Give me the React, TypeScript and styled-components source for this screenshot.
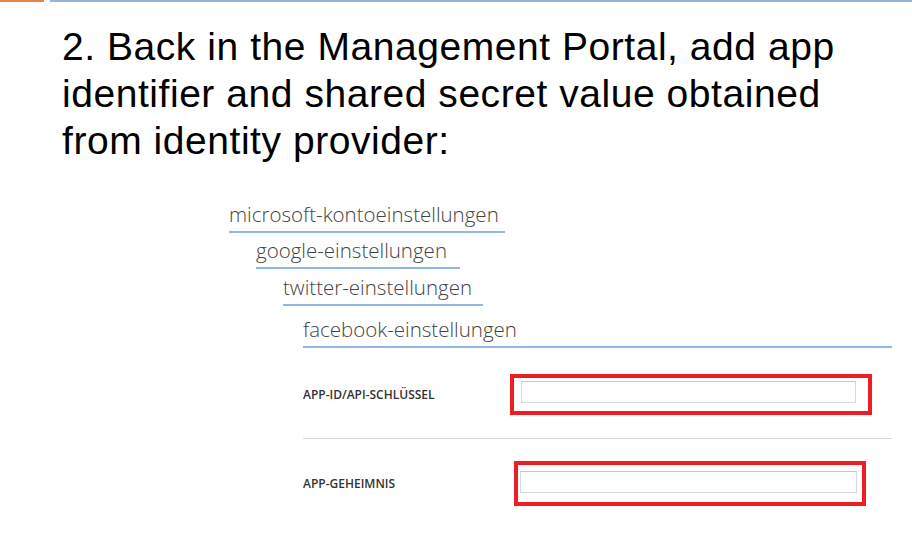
import React from "react";
import styled, { createGlobalStyle } from "styled-components";

const Global = createGlobalStyle`
  html, body { margin: 0; padding: 0; background: #ffffff; }
  body { width: 912px; height: 548px; overflow: hidden; }
`;

const Page = styled.div`
  width: 912px;
  height: 548px;
  background: #fff;
  display: flex;
  flex-direction: column;
`;

const TopBar = styled.div`
  display: flex;
  gap: 6px;
  height: 2px;
`;

const BarSegment = styled.div<{ $color: string; $width?: number }>`
  height: 2px;
  background: ${(p) => p.$color};
  ${(p) => (p.$width ? `width: ${p.$width}px;` : "flex: 1;")}
`;

const Title = styled.h1`
  margin: 21px 0 0 62px;
  width: 790px;
  font-family: "Liberation Sans", Arial, sans-serif;
  font-weight: 400;
  font-size: 39px;
  letter-spacing: 0.55px;
  line-height: 47px;
  color: #000;
`;

const Panel = styled.div`
  margin: 37px 0 0 229px;
  width: 663px;
  display: flex;
  flex-direction: column;
`;

const Tab = styled.div<{ $indent: number; $pad: number; $full?: boolean; $gap: number }>`
  align-self: ${(p) => (p.$full ? "stretch" : "flex-start")};
  margin-left: ${(p) => p.$indent}px;
  margin-top: ${(p) => p.$gap}px;
  padding: 0 ${(p) => p.$pad}px 4px 0;
  border-bottom: 2px solid #8fb9e3;
  font-family: "Open Sans", "Noto Sans", sans-serif;
  font-weight: 300;
  font-size: 20.5px;
  line-height: 26px;
  color: #444;
  white-space: nowrap;
`;

const Form = styled.div`
  margin-left: 74px;
  display: flex;
  flex-direction: column;
`;

const Row = styled.div<{ $gap: number }>`
  display: flex;
  align-items: center;
  margin-top: ${(p) => p.$gap}px;
`;

const Label = styled.div<{ $width: number }>`
  width: ${(p) => p.$width}px;
  flex: none;
  font-family: "Open Sans", "Noto Sans", sans-serif;
  font-weight: 600;
  font-size: 12px;
  color: #333;
  white-space: nowrap;
`;

const Highlight = styled.div<{ $w: number; $pt: number; $pr: number; $pb: number; $pl: number }>`
  box-sizing: border-box;
  width: ${(p) => p.$w}px;
  border: 4px solid #ee1c25;
  padding: ${(p) => `${p.$pt}px ${p.$pr}px ${p.$pb}px ${p.$pl}px`};
  background: #fff;
`;

const Input = styled.input`
  box-sizing: border-box;
  display: block;
  width: 100%;
  height: 22px;
  margin: 0;
  border: 1px solid #d3d9e2;
  border-top-color: #c4c7cd;
  background: #fff;
  outline: none;
`;

const Divider = styled.div`
  height: 1px;
  background: #dadada;
  margin-top: 23px;
`;

const tabs = [
  { label: "microsoft-kontoeinstellungen", indent: 0, pad: 6, gap: 0 },
  { label: "google-einstellungen", indent: 27, pad: 13, gap: 4 },
  { label: "twitter-einstellungen", indent: 54, pad: 11, gap: 5 },
];

export default function App() {
  return (
    <Page>
      <Global />
      <TopBar>
        <BarSegment $color="#e8834a" $width={44} />
        <BarSegment $color="#95b3d7" />
      </TopBar>
      <Title>
        2. Back in the Management Portal, add app identifier and shared secret value obtained from identity provider:
      </Title>
      <Panel>
        {tabs.map((t) => (
          <Tab key={t.label} $indent={t.indent} $pad={t.pad} $gap={t.gap}>
            {t.label}
          </Tab>
        ))}
        <Form>
          <Tab $indent={0} $pad={0} $gap={10} $full>
            facebook-einstellungen
          </Tab>
          <Row $gap={26}>
            <Label $width={207}>APP-ID/API-SCHLÜSSEL</Label>
            <Highlight $w={362} $pt={3} $pr={12} $pb={8} $pl={7}>
              <Input type="text" aria-label="APP-ID/API-SCHLÜSSEL" />
            </Highlight>
          </Row>
          <Divider />
          <Row $gap={22}>
            <Label $width={211}>APP-GEHEIMNIS</Label>
            <Highlight $w={352} $pt={6} $pr={5} $pb={9} $pl={2}>
              <Input type="text" aria-label="APP-GEHEIMNIS" />
            </Highlight>
          </Row>
        </Form>
      </Panel>
    </Page>
  );
}
